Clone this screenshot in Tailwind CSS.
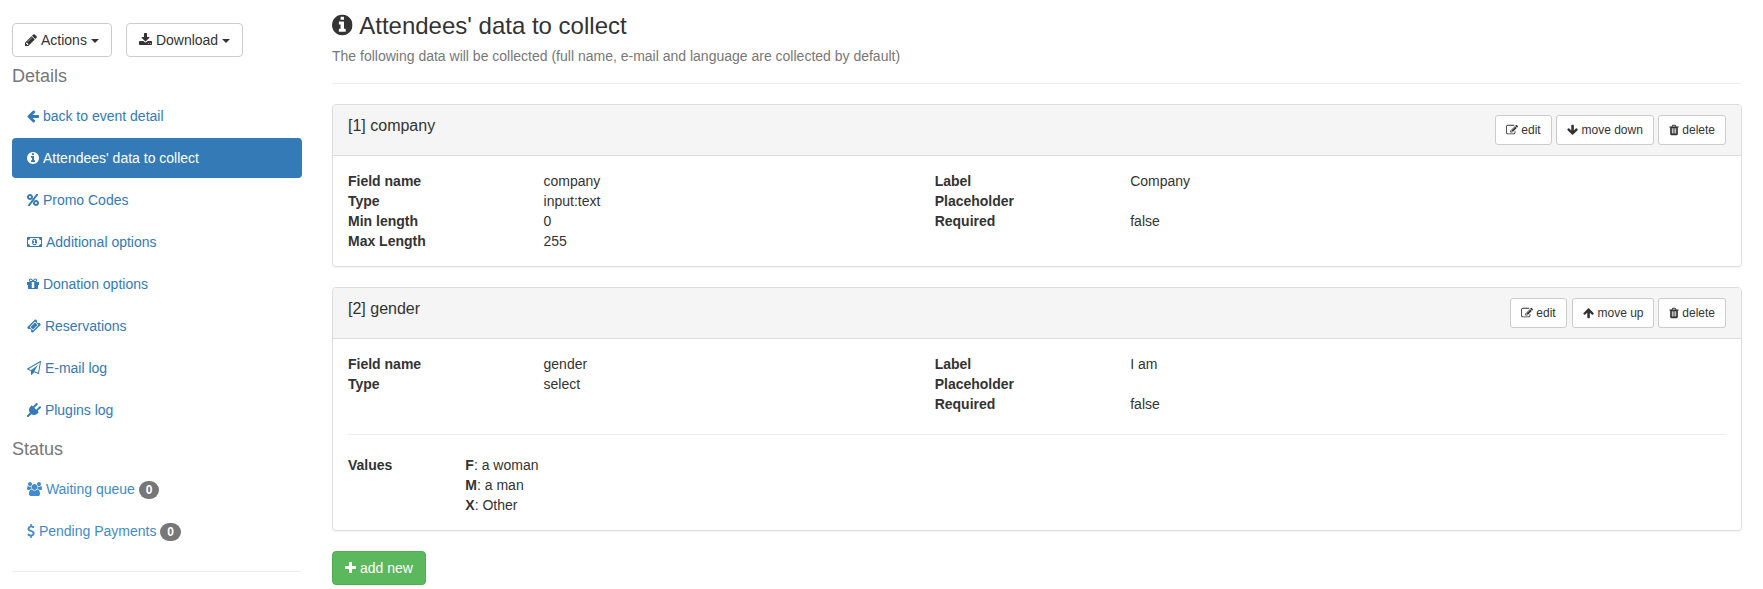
<!DOCTYPE html>
<html lang="en">
<head>
<meta charset="utf-8">
<title>Attendees' data to collect</title>
<script src="https://cdn.jsdelivr.net/npm/@tailwindcss/browser@4"></script>
</head>
<body class="bg-white font-['Liberation_Sans',Arial,sans-serif] text-[14px] leading-[20px] text-[#333]">
<svg class="hidden">
  <symbol id="pencil" viewBox="128 0 1536 1792"><path d="M491 1536l91-91-235-235-91 91v107h128v128h107zm523-928q0-22-22-22-10 0-17 7l-542 542q-7 7-7 17 0 22 22 22 10 0 17-7l542-542q7-7 7-17zm-54-192l416 416-832 832h-416v-416zm683 96q0 53-37 90l-166 166-416-416 166-165q36-38 90-38 53 0 91 38l235 234q37 39 37 91z"/></symbol>
  <symbol id="download" viewBox="64 0 1664 1792"><path d="M1344 1344q0-26-19-45t-45-19-45 19-19 45 19 45 45 19 45-19 19-45zm256 0q0-26-19-45t-45-19-45 19-19 45 19 45 45 19 45-19 19-45zm128-224v320q0 40-28 68t-68 28h-1472q-40 0-68-28t-28-68v-320q0-40 28-68t68-28h465l135 136q58 56 136 56t136-56l136-136h464q40 0 68 28t28 68zm-325-569q17 41-14 70l-448 448q-18 19-45 19t-45-19l-448-448q-31-29-14-70 17-39 59-39h256v-448q0-26 19-45t45-19h256q26 0 45 19t19 45v448h256q42 0 59 39z"/></symbol>
  <symbol id="arrow-left" viewBox="128 0 1536 1792"><path d="M1664 896v128q0 53-32.5 90.5t-84.5 37.5h-704l293 294q38 36 38 90t-38 90l-75 76q-37 37-90 37-52 0-91-37l-651-652q-37-37-37-90 0-52 37-91l651-650q38-38 91-38 52 0 90 38l75 74q38 38 38 91t-38 91l-293 293h704q52 0 84.5 37.5t32.5 90.5z"/></symbol>
  <symbol id="info" viewBox="128 0 1536 1792"><path d="M1152 1376v-160q0-14-9-23t-23-9h-96v-512q0-14-9-23t-23-9h-320q-14 0-23 9t-9 23v160q0 14 9 23t23 9h96v320h-96q-14 0-23 9t-9 23v160q0 14 9 23t23 9h448q14 0 23-9t9-23zm-128-896v-160q0-14-9-23t-23-9h-192q-14 0-23 9t-9 23v160q0 14 9 23t23 9h192q14 0 23-9t9-23zm640 416q0 209-103 385.5t-279.5 279.5-385.5 103-385.5-103-279.5-279.5-103-385.5 103-385.5 279.5-279.5 385.5-103 385.5 103 279.5 279.5 103 385.5z"/></symbol>
  <symbol id="percent" viewBox="128 0 1536 1792"><path d="M1408 1280q0-52-38-90t-90-38-90 38-38 90 38 90 90 38 90-38 38-90zm-768-768q0-52-38-90t-90-38-90 38-38 90 38 90 90 38 90-38 38-90zm1024 768q0 159-112.5 271.5t-271.5 112.5-271.5-112.5-112.5-271.5 112.5-271.5 271.5-112.5 271.5 112.5 112.5 271.5zm-96-1088q0 20-13 38l-1056 1408q-19 26-51 26h-160q-26 0-45-19t-19-45q0-20 13-38l1056-1408q19-26 51-26h160q26 0 45 19t19 45zm-672 320q0 159-112.5 271.5t-271.5 112.5-271.5-112.5-112.5-271.5 112.5-271.5 271.5-112.5 271.5 112.5 112.5 271.5z"/></symbol>
  <symbol id="money" viewBox="0 0 1920 1792"><path d="M768 1152h384v-96h-128v-448h-114l-148 137 77 80q42-37 55-57h2v288h-128v96zm512-256q0 70-21 142t-59.5 134-101.5 101-138 39-138-39-101.5-101-59.5-134-21-142 21-142 59.5-134 101.5-101 138-39 138 39 101.5 101 59.5 134 21 142zm512 256v-512q-106 0-181-75t-75-181h-1152q0 106-75 181t-181 75v512q106 0 181 75t75 181h1152q0-106 75-181t181-75zm128-832v1152q0 26-19 45t-45 19h-1792q-26 0-45-19t-19-45v-1152q0-26 19-45t45-19h1792q26 0 45 19t19 45z"/></symbol>
  <symbol id="gift" viewBox="128 0 1536 1792"><path d="M1056 1356v-716h-320v716q0 25 18 38.5t46 13.5h192q28 0 46-13.5t18-38.5zm-456-844h195l-126-161q-26-31-69-31-40 0-68 28t-28 68 28 68 68 28zm688-96q0-40-28-68t-68-28q-43 0-69 31l-125 161h194q40 0 68-28t28-68zm376 256v320q0 14-9 23t-23 9h-96v416q0 40-28 68t-68 28h-1088q-40 0-68-28t-28-68v-416h-96q-14 0-23-9t-9-23v-320q0-14 9-23t23-9h440q-93 0-158.5-65.5t-65.5-158.5 65.5-158.5 158.5-65.5q107 0 168 77l128 165 128-165q61-77 168-77 93 0 158.5 65.5t65.5 158.5-65.5 158.5-158.5 65.5h440q14 0 23 9t9 23z"/></symbol>
  <symbol id="ticket" viewBox="0 0 1792 1792"><path d="M1024 452l316 316-572 572-316-316zm-211 979l618-618q19-19 19-45t-19-45l-362-362q-18-18-45-18t-45 18l-618 618q-19 19-19 45t19 45l362 362q18 18 45 18t45-18zm889-637l-907 908q-37 37-90.5 37t-90.5-37l-126-126q56-56 56-136t-56-136-136-56-136 56l-125-126q-37-37-37-90.5t37-90.5l907-906q37-37 90.5-37t90.5 37l125 125q-56 56-56 136t56 136 136 56 136-56l126 125q37 37 37 90.5t-37 90.5z"/></symbol>
  <symbol id="plane" viewBox="0 0 1792 1792"><path d="M1764 11q33 24 27 64l-256 1536q-5 29-32 45-14 8-31 8-11 0-24-5l-527-215-298 327q-18 21-47 21-14 0-23-4-19-7-30-23.5t-11-36.5v-452l-472-193q-37-14-40-55-3-39 32-59l1664-960q35-21 68 2zm-342 1499l221-1323-1434 827 336 137 863-639-478 797z"/></symbol>
  <symbol id="plug" viewBox="0 0 1792 1792"><path d="M1755 453q37 38 37 90.5t-37 90.5l-401 400 150 150-160 160q-163 163-389.5 186.5t-411.5-100.5l-362 362h-181v-181l362-362q-124-185-100.5-411.5t186.5-389.5l160-160 150 150 400-401q38-37 91-37t90 37 37 90.5-37 90.5l-400 401 234 234 401-400q38-37 91-37t90 37z"/></symbol>
  <symbol id="users" viewBox="0 -256 1920 1792"><path transform="translate(0 -256)" d="M593 896q-162 5-265 128h-134q-82 0-138-40.5t-56-118.5q0-353 124-353 6 0 43.5 21t97.5 42.5 119 21.5q67 0 133-23-5 37-5 66 0 139 81 256zm1071 637q0 120-73 189.5t-194 69.5h-874q-121 0-194-69.5t-73-189.5q0-53 3.5-103.5t14-109 26.5-108.5 43-97.5 62-81 85.5-53.5 111.5-20q10 0 43 21.5t73 48 107 48 135 21.5 135-21.5 107-48 73-48 43-21.5q61 0 111.5 20t85.5 53.5 62 81 43 97.5 26.5 108.5 14 109 3.5 103.5zm-1024-1277q0 106-75 181t-181 75-181-75-75-181 75-181 181-75 181 75 75 181zm704 384q0 159-112.5 271.5t-271.5 112.5-271.5-112.5-112.5-271.5 112.5-271.5 271.5-112.5 271.5 112.5 112.5 271.5zm576 225q0 78-56 118.5t-138 40.5h-134q-103-123-265-128 81-117 81-256 0-29-5-66 66 23 133 23 59 0 119-21.5t97.5-42.5 43.5-21q124 0 124 353zm-128-609q0 106-75 181t-181 75-181-75-75-181 75-181 181-75 181 75 75 181z"/></symbol>
  <symbol id="usd" viewBox="384 0 1024 1792"><path d="M1362 1185q0 153-99.5 263.5t-258.5 136.5v175q0 14-9 23t-23 9h-135q-13 0-22.5-9.5t-9.5-22.5v-175q-66-9-127.5-31t-101.5-44.5-74-48-46.5-37.5-17.5-18q-17-21-2-41l103-135q7-10 23-12 15-2 24 9l2 2q113 99 243 125 37 8 74 8 81 0 142.5-43t61.5-122q0-28-15-53t-33.5-42-58.5-37.5-66-32-80-32.5q-39-16-61.5-25t-61.5-26.5-62.5-31-56.5-35.5-53.5-42.5-43.5-49-35.5-58-21-66.5-8.5-78q0-138 98-242t255-134v-180q0-13 9.5-22.5t22.5-9.5h135q14 0 23 9t9 23v176q57 6 110.5 23t87 33.5 63.5 37.5 39 29 15 14q17 18 5 38l-81 146q-8 15-23 16-14 3-27-7-3-3-14.5-12t-39-26.5-58.5-32-74.5-26-85.5-11.5q-95 0-155 43t-60 111q0 26 8.5 48t29.5 41.5 39.5 33 56 31 60.5 27 70 27.5q53 20 81 31.5t76 35 75.5 42.5 62 50 53 63.5 31.5 76.5 13 94z"/></symbol>
  <symbol id="edit" viewBox="0 0 1792 1792"><path d="M888 1184l116-116-152-152-116 116v56h96v96h56zm440-720q-16-16-33 1l-350 350q-17 17-1 33t33-1l350-350q17-17 1-33zm80 594v190q0 119-84.5 203.5t-203.5 84.5h-832q-119 0-203.5-84.5t-84.5-203.5v-832q0-119 84.5-203.5t203.5-84.5h832q63 0 117 25 15 7 18 23 3 17-9 29l-49 49q-14 14-32 8-23-6-45-6h-832q-66 0-113 47t-47 113v832q0 66 47 113t113 47h832q66 0 113-47t47-113v-126q0-13 9-22l64-64q15-15 35-7t20 29zm-96-738l288 288-672 672h-288v-288zm444 132l-92 92-288-288 92-92q28-28 68-28t68 28l152 152q28 28 28 68t-28 68z"/></symbol>
  <symbol id="arrow-down" viewBox="64 0 1664 1792"><path d="M1675 832q0 53-37 90l-651 652q-39 37-91 37-53 0-90-37l-651-652q-38-36-38-90 0-53 38-91l74-75q39-37 91-37 53 0 90 37l294 294v-704q0-52 38-90t90-38h128q52 0 90 38t38 90v704l294-294q37-37 90-37 52 0 91 37l75 75q37 39 37 91z"/></symbol>
  <symbol id="arrow-up" viewBox="64 0 1664 1792"><path d="M1675 971q0 51-37 90l-75 75q-38 38-91 38-54 0-90-38l-294-293v704q0 52-37.5 84.5t-90.5 32.5h-128q-53 0-90.5-32.5t-37.5-84.5v-704l-294 293q-36 38-90 38t-90-38l-75-75q-38-38-38-90 0-53 38-91l651-651q35-37 90-37 54 0 91 37l651 651q37 39 37 91z"/></symbol>
  <symbol id="trash" viewBox="192 0 1408 1792"><path d="M704 1376v-704q0-14-9-23t-23-9h-64q-14 0-23 9t-9 23v704q0 14 9 23t23 9h64q14 0 23-9t9-23zm256 0v-704q0-14-9-23t-23-9h-64q-14 0-23 9t-9 23v704q0 14 9 23t23 9h64q14 0 23-9t9-23zm256 0v-704q0-14-9-23t-23-9h-64q-14 0-23 9t-9 23v704q0 14 9 23t23 9h64q14 0 23-9t9-23zm-544-992h448l-48-117q-7-9-17-11h-317q-10 2-17 11zm928 32v64q0 14-9 23t-23 9h-96v948q0 83-47 143.5t-113 60.5h-832q-66 0-113-58.5t-47-141.5v-952h-96q-14 0-23-9t-9-23v-64q0-14 9-23t23-9h309l70-167q15-37 54-63t79-26h320q40 0 79 26t54 63l70 167h309q14 0 23 9t9 23z"/></symbol>
  <symbol id="plus" viewBox="192 0 1408 1792"><path d="M1600 736v192q0 40-28 68t-68 28h-416v416q0 40-28 68t-68 28h-192q-40 0-68-28t-28-68v-416h-416q-40 0-68-28t-28-68v-192q0-40 28-68t68-28h416v-416q0-40 28-68t68-28h192q40 0 68 28t28 68v416h416q40 0 68 28t28 68z"/></symbol>
</svg>
<div class="flex h-[589px] gap-[30px] overflow-hidden pl-3 pr-[21px]">
  <aside class="w-[290px] shrink-0 pt-[23px]">
    <div class="flex gap-[14px]">
      <button class="h-[34px] w-[100px] whitespace-nowrap rounded border border-[#ccc] bg-white px-3 text-left leading-[20px]"><svg class="mr-[4px] inline-block h-[14px] w-[12px] fill-current align-[-2px]"><use href="#pencil"/></svg>Actions <span class="inline-block border-x-4 border-t-4 border-x-transparent border-t-[#333] align-middle"></span></button>
      <button class="h-[34px] w-[117px] whitespace-nowrap rounded border border-[#ccc] bg-white px-3 text-left leading-[20px]"><svg class="inline-block h-[14px] w-[13px] fill-current align-[-2px]"><use href="#download"/></svg> Download <span class="inline-block border-x-4 border-t-4 border-x-transparent border-t-[#333] align-middle"></span></button>
    </div>
    <h4 class="mt-[9px] h-[20px] text-[18px] leading-[20px] text-[#777]">Details</h4>
    <nav class="mt-[10px] flex flex-col gap-[2px] text-[#337ab7]">
      <a class="h-[40px] px-[15px] py-[10px]"><svg class="inline-block h-[14px] w-[12px] fill-current align-[-2px]"><use href="#arrow-left"/></svg> back to event detail</a>
      <a class="h-[40px] rounded bg-[#337ab7] px-[15px] py-[10px] text-white"><svg class="mr-[4px] inline-block h-[14px] w-[12px] fill-current align-[-2px]"><use href="#info"/></svg>Attendees' data to collect</a>
      <a class="h-[40px] px-[15px] py-[10px]"><svg class="inline-block h-[14px] w-[12px] fill-current align-[-2px]"><use href="#percent"/></svg> Promo Codes</a>
      <a class="h-[40px] px-[15px] py-[10px]"><svg class="mr-[4px] inline-block h-[14px] w-[15px] fill-current align-[-2px]"><use href="#money"/></svg>Additional options</a>
      <a class="h-[40px] px-[15px] py-[10px]"><svg class="inline-block h-[14px] w-[12px] fill-current align-[-2px]"><use href="#gift"/></svg> Donation options</a>
      <a class="h-[40px] px-[15px] py-[10px]"><svg class="inline-block h-[14px] w-[14px] fill-current align-[-2px]"><use href="#ticket"/></svg> Reservations</a>
      <a class="h-[40px] px-[15px] py-[10px]"><svg class="inline-block h-[14px] w-[14px] fill-current align-[-2px]"><use href="#plane"/></svg> E-mail log</a>
      <a class="h-[40px] px-[15px] py-[10px]"><svg class="inline-block h-[14px] w-[14px] fill-current align-[-2px]"><use href="#plug"/></svg> Plugins log</a>
    </nav>
    <h4 class="mt-[9px] h-[20px] text-[18px] leading-[20px] text-[#777]">Status</h4>
    <nav class="mt-[10px] flex flex-col gap-[2px] text-[#428bca]">
      <a class="h-[40px] px-[15px] py-[10px]"><svg class="inline-block h-[14px] w-[15px] fill-current align-[-2px]"><use href="#users"/></svg> Waiting queue <span class="inline-block rounded-[10px] bg-[#777] px-[7px] py-[3px] align-middle text-[12px] font-bold leading-none text-white">0</span></a>
      <a class="h-[40px] px-[15px] py-[10px]"><svg class="inline-block h-[14px] w-[8px] fill-current align-[-2px]"><use href="#usd"/></svg> Pending Payments <span class="inline-block rounded-[10px] bg-[#777] px-[7px] py-[3px] align-middle text-[12px] font-bold leading-none text-white">0</span></a>
    </nav>
    <hr class="mt-[20px] border-[#eee]">
  </aside>
  <main class="min-w-0 flex-1 pt-[13px]">
    <h3 class="h-[26px] text-[24px] leading-[26px]"><svg class="mr-[6.67px] inline-block h-[24px] w-[20.57px] fill-current align-[-3.43px]"><use href="#info"/></svg>Attendees' data to collect</h3>
    <p class="mt-[7px] text-[#777]">The following data will be collected (full name, e-mail and language are collected by default)</p>
    <hr class="mt-[17px] mb-[20px] border-[#eee]">

    <section class="mb-[20px] rounded border border-[#ddd] shadow-[0_1px_1px_rgba(0,0,0,0.05)]">
      <header class="flex h-[51px] justify-between rounded-t-[3px] border-b border-[#ddd] bg-[#f5f5f5] px-[15px] py-[10px]">
        <h3 class="text-[16px] leading-[22px]">[1] company</h3>
        <div class="flex h-[30px] gap-1 whitespace-nowrap text-[12px] leading-[18px]">
          <button class="w-[57px] rounded-[3px] border border-[#ccc] bg-white px-[10px] text-left"><svg class="inline-block h-[12px] w-[12px] fill-current align-[-1.71px]"><use href="#edit"/></svg> edit</button>
          <button class="w-[98px] rounded-[3px] border border-[#ccc] bg-white px-[10px] text-left"><svg class="inline-block h-[12px] w-[11.14px] fill-current align-[-1.71px]"><use href="#arrow-down"/></svg> move down</button>
          <button class="w-[68px] rounded-[3px] border border-[#ccc] bg-white px-[10px] text-left"><svg class="inline-block h-[12px] w-[10px] fill-current align-[-1.71px]"><use href="#trash"/></svg> delete</button>
        </div>
      </header>
      <div class="flex p-[15px]">
        <dl class="grid w-[586.67px] grid-cols-[195.56px_1fr] content-start auto-rows-[20px]">
          <dt class="font-bold">Field name</dt><dd>company</dd>
          <dt class="font-bold">Type</dt><dd>input:text</dd>
          <dt class="font-bold">Min length</dt><dd>0</dd>
          <dt class="font-bold">Max Length</dt><dd>255</dd>
        </dl>
        <dl class="grid w-[586.67px] grid-cols-[195.56px_1fr] content-start auto-rows-[20px]">
          <dt class="font-bold">Label</dt><dd>Company</dd>
          <dt class="font-bold">Placeholder</dt><dd></dd>
          <dt class="font-bold">Required</dt><dd>false</dd>
        </dl>
      </div>
    </section>

    <section class="mb-[20px] rounded border border-[#ddd] shadow-[0_1px_1px_rgba(0,0,0,0.05)]">
      <header class="flex h-[51px] justify-between rounded-t-[3px] border-b border-[#ddd] bg-[#f5f5f5] px-[15px] py-[10px]">
        <h3 class="text-[16px] leading-[22px]">[2] gender</h3>
        <div class="flex h-[30px] gap-1 whitespace-nowrap text-[12px] leading-[18px]">
          <button class="mr-px w-[57px] rounded-[3px] border border-[#ccc] bg-white px-[10px] text-left"><svg class="inline-block h-[12px] w-[12px] fill-current align-[-1.71px]"><use href="#edit"/></svg> edit</button>
          <button class="w-[82px] rounded-[3px] border border-[#ccc] bg-white px-[10px] text-left"><svg class="inline-block h-[12px] w-[11.14px] fill-current align-[-1.71px]"><use href="#arrow-up"/></svg> move up</button>
          <button class="w-[68px] rounded-[3px] border border-[#ccc] bg-white px-[10px] text-left"><svg class="inline-block h-[12px] w-[10px] fill-current align-[-1.71px]"><use href="#trash"/></svg> delete</button>
        </div>
      </header>
      <div class="p-[15px]">
        <div class="flex">
          <dl class="grid w-[586.67px] grid-cols-[195.56px_1fr] content-start auto-rows-[20px]">
            <dt class="font-bold">Field name</dt><dd>gender</dd>
            <dt class="font-bold">Type</dt><dd>select</dd>
          </dl>
          <dl class="grid w-[586.67px] grid-cols-[195.56px_1fr] content-start auto-rows-[20px]">
            <dt class="font-bold">Label</dt><dd>I am</dd>
            <dt class="font-bold">Placeholder</dt><dd></dd>
            <dt class="font-bold">Required</dt><dd>false</dd>
          </dl>
        </div>
        <hr class="my-[20px] border-[#eee]">
        <div class="flex">
          <div class="w-[117.33px] font-bold">Values</div>
          <ul>
            <li><b class="font-bold">F</b>: a woman</li>
            <li><b class="font-bold">M</b>: a man</li>
            <li><b class="font-bold">X</b>: Other</li>
          </ul>
        </div>
      </div>
    </section>

    <button class="h-[34px] rounded border border-[#4cae4c] bg-[#5cb85c] px-3 leading-[20px] text-white"><svg class="inline-block h-[14px] w-[11px] fill-current align-[-2px]"><use href="#plus"/></svg> add new</button>
  </main>
</div>
</body>
</html>
